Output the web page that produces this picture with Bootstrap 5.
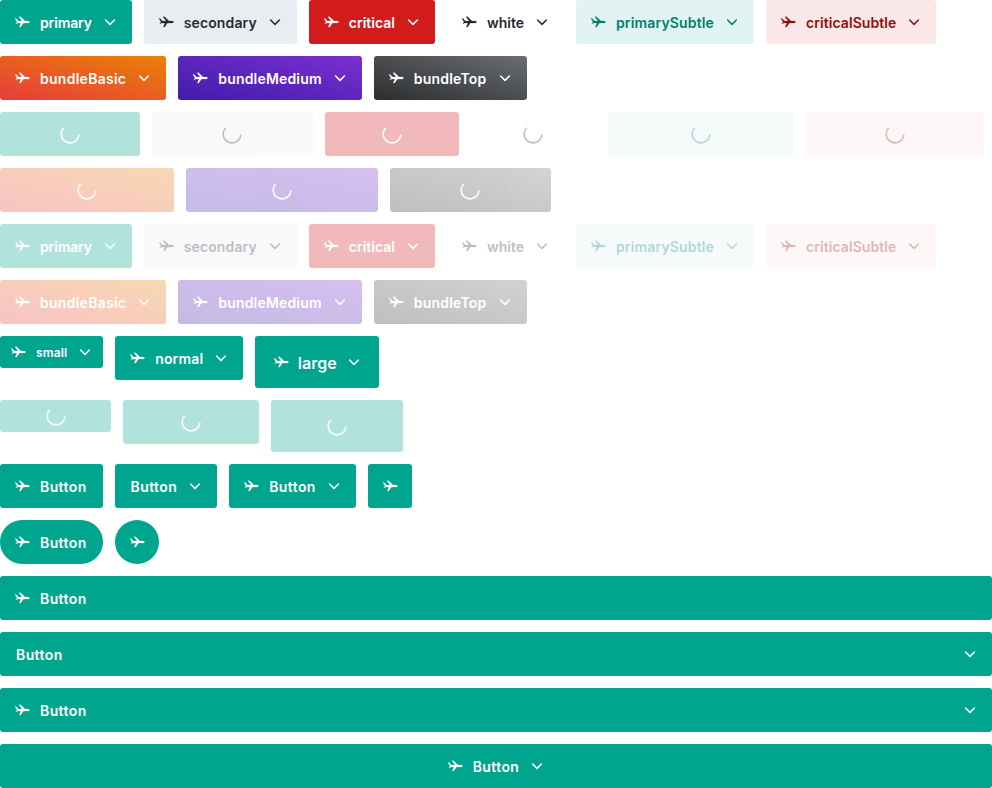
<!doctype html>
<html><head><meta charset="utf-8">
<link rel="stylesheet" href="https://cdn.jsdelivr.net/npm/bootstrap@5.3.0/dist/css/bootstrap.min.css">
<style>
body{font-family:Inter,"Liberation Sans",Arial,sans-serif;background:#fff}
.stack{display:flex;flex-direction:column;gap:12px}
.orow{display:flex;flex-wrap:wrap;align-items:flex-start;gap:12px}
.ob{display:inline-flex;align-items:center;gap:10px;height:44px;padding:0 16px;border:0;border-radius:3px;font-size:14px;font-weight:600;line-height:20px;position:relative;white-space:nowrap}
.ob>span{position:relative;top:1px}
.ob svg{flex:none;width:16px;height:16px;fill:currentColor}
.ob.st{padding-left:14px}
.ob.en{padding-right:14px}
.ob.sm{height:32px;padding:0 10px;font-size:12px}
.ob.lg{height:52px;padding:0 17.5px;font-size:16px;gap:9px}
.ob.pill{border-radius:22px}
.ob.ic{padding:0 14px}
.ob.wide{display:flex;width:100%}
.sp{flex:1 1 auto}
.center{justify-content:center}
.tx-primary{letter-spacing:-.14px}
.tx-secondary{letter-spacing:.11px}
.tx-primarySubtle{letter-spacing:.15px}
.tx-criticalSubtle{letter-spacing:.07px}
.tx-bundleBasic{letter-spacing:.27px}
.tx-bundleMedium{letter-spacing:.17px}
.tx-bundleTop{letter-spacing:.22px}
.tx-small{letter-spacing:.12px}
.tx-normal{letter-spacing:.17px}
.tx-Button{letter-spacing:.4px}
.primary{background:#00a58e;color:#fff}
.secondary{background:#e8edf1;color:#252a31}
.critical{background:#d21c1c;color:#fff}
.white{background:#fff;color:#252a31}
.primarySubtle{background:#e1f4f3;color:#007f6d}
.criticalSubtle{background:#fae8e8;color:#970c0c}
.bundleBasic{background:linear-gradient(to top right,#e73c3c,#eb8105);color:#fff}
.bundleMedium{background:linear-gradient(to top right,#3f1dab,#7c2fd0);color:#fff}
.bundleTop{background:linear-gradient(to top right,#2d2d2e,#696e73);color:#fff}
.dis{opacity:.3}
.load{opacity:.3}
.load>*{visibility:hidden}
.load.ob{padding-right:22px}
.load.ob.sm{padding-right:18px}
.load.ob.lg{padding-right:25.5px}
.load .spin{visibility:visible;position:absolute;left:50%;top:50%;width:20px;height:20px;margin:-10px 0 0 -10px;fill:none;stroke:currentColor;stroke-width:1.6}
.planeg{stroke:currentColor;stroke-width:.2;stroke-linejoin:round}
</style></head><body>
<div class="stack" id="r"></div>
<svg width="0" height="0" class="position-absolute"><defs>
<symbol id="pl" viewBox="0 0 16 16"><path class="planeg" d="M1 4.500h1.200L4.300 7H8.200L4.900 2.800H6.600L11 7h2.800c.9 0 1.700.4 1.700 1s-.8 1.100-1.700 1.100H9.400L6.700 13H5.300L6.900 9.100H3.800L1.700 10 3 8z" /></symbol>
<symbol id="ch" viewBox="0 0 16 16"><path d="M3.600 6 8 10.400 12.400 6" fill="none" stroke="currentColor" stroke-width="1.500" stroke-linecap="round" stroke-linejoin="round"/></symbol>
</defs></svg>
<script>
var I='<svg><use href="#pl"/></svg>',C='<svg><use href="#ch"/></svg>',S='<svg class="spin" viewBox="0 0 20 20"><path d="M3.800 3.800A8.800 8.800 0 1 0 18.800 10.500"/></svg>';
function tx(t){return '<span class="tx-'+t+'">'+t+'</span>'}
function b(cls,t,l,pre,post){pre=pre!==false;post=post!==false;return '<button class="ob '+cls+(pre?' st':'')+(post?' en':'')+'">'+(pre?I:'')+(t?tx(t):'')+(post?C:'')+(l?S:'')+'</button>'}
var row=function(a){return '<div class="orow">'+a.join('')+'</div>'};
var A=['primary','secondary','critical','white','primarySubtle','criticalSubtle'],B=['bundleBasic','bundleMedium','bundleTop'];
var h='';
h+=row(A.map(x=>b(x,x)))+row(B.map(x=>b(x,x)));
h+=row(A.map(x=>b(x+' load',x,1)))+row(B.map(x=>b(x+' load',x,1)));
h+=row(A.map(x=>b(x+' dis',x)))+row(B.map(x=>b(x+' dis',x)));
h+=row([b('primary sm','small'),b('primary','normal'),b('primary lg','large')]);
h+=row([b('primary sm load','small',1),b('primary load','normal',1),b('primary lg load','large',1)]);
h+=row([b('primary','Button',0,true,false),b('primary','Button',0,false,true),b('primary','Button'),b('primary ic','',0,true,false)]);
h+=row([b('primary pill','Button',0,true,false),b('primary pill ic','',0,true,false)]);
h+='<button class="ob wide primary st">'+I+tx('Button')+'</button>';
h+='<button class="ob wide primary en">'+tx('Button')+'<span class="sp"></span>'+C+'</button>';
h+='<button class="ob wide primary st en">'+I+tx('Button')+'<span class="sp"></span>'+C+'</button>';
h+='<button class="ob wide center primary st en">'+I+tx('Button')+C+'</button>';
document.getElementById('r').innerHTML=h;
</script>
<script src="https://cdn.jsdelivr.net/npm/bootstrap@5.3.0/dist/js/bootstrap.bundle.min.js"></script>
</body></html>
